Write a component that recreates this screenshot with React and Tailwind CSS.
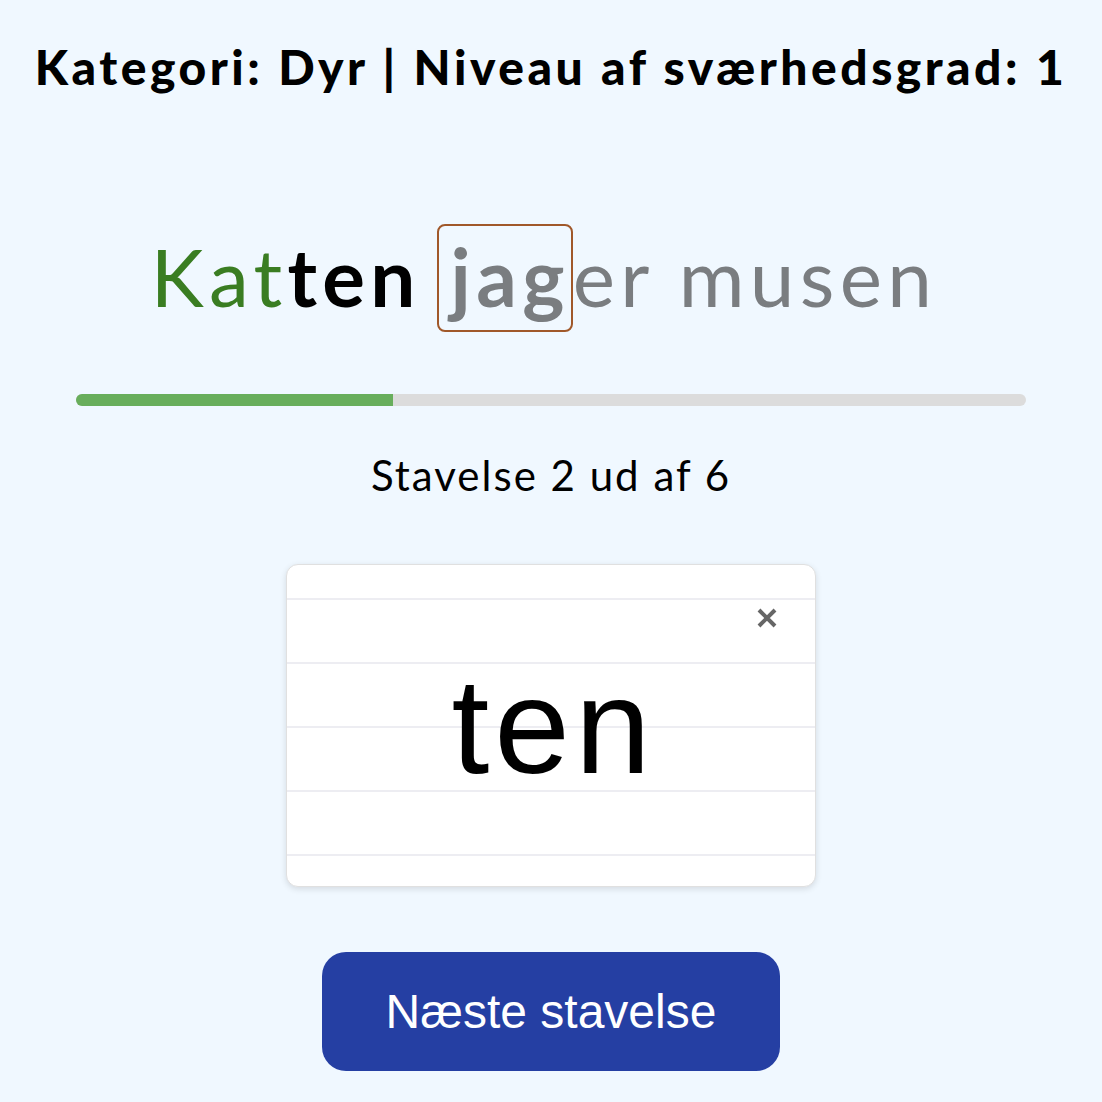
export default function App() {
  const current = 2;
  const total = 6;
  const pct = 100 / 3;

  return (
    <div className="min-h-[1102px] w-full bg-[#f0f8ff] flex flex-col items-center font-['Lato',sans-serif]">
      {/* overskrift */}
      <h1 className="mt-[38px] text-[48px] leading-[58px] font-black text-black tracking-[3.5px]">
        Kategori: Dyr | Niveau af sværhedsgrad: 1
      </h1>

      {/* sætning */}
      <div className="mt-[140px] pr-[14px] text-[80px] leading-[1] tracking-[5.3px] flex items-baseline">
        <span className="text-[#3a7d22]">Kat</span>
        <span className="text-black font-bold">ten</span>
        <span className="w-[16px]" />
        <span className="text-[#7a7d80] font-bold border-2 border-[#a0582a] rounded-[8px] pl-[12px] pr-[1px] pt-[10px] pb-[14px] -my-[24px]">
          jag
        </span>
        <span className="text-[#7a7d80]">er musen</span>
      </div>

      {/* fremskridt */}
      <div className="mt-[78px] w-[950px] h-[12px] rounded-full bg-[#dcdcdc] overflow-hidden">
        <div className="h-full bg-[#68ae5c]" style={{ width: pct + "%" }} />
      </div>

      <p className="mt-[44px] text-[42px] leading-[50px] tracking-[2px] text-black">
        Stavelse {current} ud af {total}
      </p>

      {/* kort */}
      <div className="mt-[64px] w-[530px] h-[323px] bg-white border border-[#e0e0e0] rounded-[12px] shadow-[0_2px_6px_rgba(0,0,0,0.12)] bg-[linear-gradient(#ededf2_2px,transparent_2px)] bg-[length:100%_64px] bg-[position:0_33px] flex flex-col">
        <div className="flex justify-end pr-[38px] pt-[43px] h-[93px]">
          <button className="w-[20px] h-[20px]">
            <svg viewBox="0 0 20 20" className="w-[20px] h-[20px]" stroke="#666" strokeWidth="4">
              <path d="M2 2L18 18M18 2L2 18" />
            </svg>
          </button>
        </div>
        <div className="flex justify-center">
          <span className="text-[136px] leading-[1] font-['Liberation_Sans',sans-serif] text-black tracking-[5px] pl-[5px]">
            ten
          </span>
        </div>
      </div>

      <button className="mt-[65px] w-[458px] h-[119px] rounded-[24px] bg-[#253fa3] text-white text-[48px] font-['Liberation_Sans',sans-serif]">
        Næste stavelse
      </button>
    </div>
  );
}
